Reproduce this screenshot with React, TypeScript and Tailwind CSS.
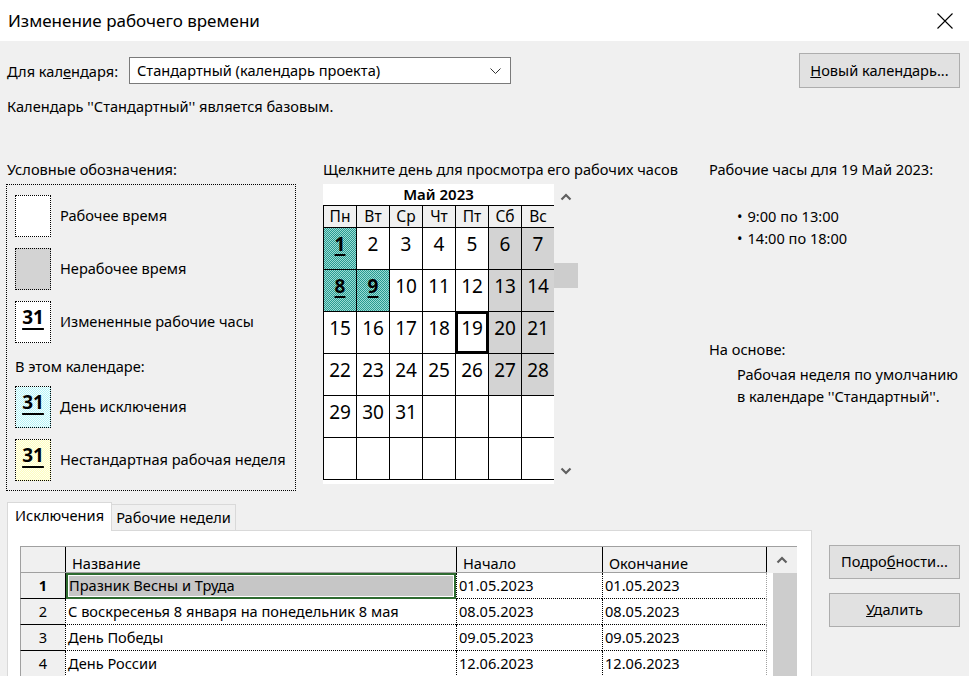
import React from "react";

const weeks: (number | null)[][] = [
  [1, 2, 3, 4, 5, 6, 7],
  [8, 9, 10, 11, 12, 13, 14],
  [15, 16, 17, 18, 19, 20, 21],
  [22, 23, 24, 25, 26, 27, 28],
  [29, 30, 31, null, null, null, null],
  [null, null, null, null, null, null, null],
];

const exceptions = [1, 8, 9];
const dayNames = ["Пн", "Вт", "Ср", "Чт", "Пт", "Сб", "Вс"];

const rows = [
  { n: 1, name: "Празник Весны и Труда", start: "01.05.2023", end: "01.05.2023" },
  { n: 2, name: "С воскресенья 8 января на понедельник 8 мая", start: "08.05.2023", end: "08.05.2023" },
  { n: 3, name: "День Победы", start: "09.05.2023", end: "09.05.2023" },
  { n: 4, name: "День России", start: "12.06.2023", end: "12.06.2023" },
];

const ChevronUp = () => (
  <svg width="12" height="8" viewBox="0 0 12 8">
    <polyline points="1.5,6.5 6,2 10.5,6.5" fill="none" stroke="#606060" strokeWidth="2.2" />
  </svg>
);

const ChevronDown = () => (
  <svg width="12" height="8" viewBox="0 0 12 8">
    <polyline points="1.5,1.5 6,6 10.5,1.5" fill="none" stroke="#606060" strokeWidth="2.2" />
  </svg>
);

const Swatch = ({ kind }: { kind: "work" | "off" | "changed" | "exception" | "week" }) => {
  const bg =
    kind === "off"
      ? "bg-[#d3d3d3]"
      : kind === "exception"
      ? "bg-[repeating-conic-gradient(#b8f2f6_0_25%,#f2ffff_0_50%)] bg-[length:2px_2px]"
      : kind === "week"
      ? "bg-[repeating-conic-gradient(#fdfdc0_0_25%,#ffffee_0_50%)] bg-[length:2px_2px]"
      : "bg-white";
  return (
    <div className={`w-[36px] h-[42px] border border-dotted border-black flex justify-center pt-[3px] ${bg}`}>
      {kind !== "work" && kind !== "off" && (
        <span className="text-[19px] font-bold leading-[24px] underline decoration-2 underline-offset-[4px]">31</span>
      )}
    </div>
  );
};

const Calendar = () => (
  <div className="flex">
    <div className="w-[231px] h-[300px] bg-white">
      <div className="h-[21px] text-center text-[15px] font-semibold leading-[21px]">Май 2023</div>
      <div className="grid grid-cols-[repeat(7,33px)] border-b border-black">
        {dayNames.map((d) => (
          <div key={d} className="h-[22px] border-l border-t border-black bg-[#f0f0f0] text-center text-[15.5px] leading-[21px]">
            {d}
          </div>
        ))}
        {weeks.flat().map((day, i) => {
          const col = i % 7;
          const isEx = day !== null && exceptions.includes(day);
          const isOff = day !== null && col >= 5 && !isEx;
          const isSel = day === 19;
          let bg = "bg-white";
          if (isEx) bg = "bg-[repeating-conic-gradient(#2a9a90_0_25%,#9adcd5_0_50%)] bg-[length:2px_2px]";
          else if (isOff) bg = "bg-[#d3d3d3]";
          return (
            <div
              key={i}
              className={`h-[42px] border-l border-t border-black flex justify-center pt-[3px] text-[19px] leading-[26px] ${bg} ${
                isSel ? "shadow-[inset_-2px_-2px_0_0_#000,inset_2px_2px_0_0_#000]" : ""
              }`}
            >
              {day !== null && (
                <span className={isEx ? "font-bold underline decoration-2 underline-offset-[3px]" : ""}>{day}</span>
              )}
            </div>
          );
        })}
      </div>
    </div>
    <div className="w-[26px] h-[300px] flex flex-col">
      <div className="h-[26px] flex items-center justify-center pr-[2px]">
        <ChevronUp />
      </div>
      <div className="mt-[53px] h-[25px] w-[24px] bg-[#cdcdcd]" />
      <div className="flex-1" />
      <div className="h-[26px] flex items-center justify-center pr-[2px]">
        <ChevronDown />
      </div>
    </div>
  </div>
);

export default function App() {
  return (
    <div className="w-[969px] h-[676px] overflow-hidden bg-[#f0f0f0] text-black text-[14.6px] font-['Noto_Sans',sans-serif] flex flex-col">
      {/* title bar */}
      <div className="h-[41px] shrink-0 bg-white flex items-center justify-between pl-[8px] pr-[16px]">
        <span className="text-[17px]">Изменение рабочего времени</span>
        <svg width="16" height="16" viewBox="0 0 16 16">
          <path d="M0.5 0.5 L15.5 15.5 M15.5 0.5 L0.5 15.5" stroke="#000" strokeWidth="1.1" />
        </svg>
      </div>

      {/* calendar selector */}
      <div className="mt-[12px] h-[35px] flex items-center pl-[7px] pr-[9px]">
        <span className="w-[122px] leading-[20px]">
          Для кал<span className="underline">е</span>ндаря:
        </span>
        <div className="w-[382px] h-[27px] bg-white border border-[#7a7a7a] flex items-center justify-between pl-[7px] pr-[9px]">
          <span>Стандартный (календарь проекта)</span>
          <svg width="11" height="6" viewBox="0 0 11 6">
            <polyline points="0.5,0.5 5.5,5.5 10.5,0.5" fill="none" stroke="#333" strokeWidth="1" />
          </svg>
        </div>
        <div className="flex-1" />
        <button className="w-[161px] h-[35px] bg-[#e1e1e1] border border-[#adadad]">
          <span className="underline">Н</span>овый календарь...
        </button>
      </div>

      <div className="mt-[8px] pl-[7px] leading-[20px]">Календарь ''Стандартный'' является базовым.</div>

      {/* main area */}
      <div className="mt-[43px] flex">
        {/* legend */}
        <div className="ml-[6px] w-[290px] flex flex-col">
          <div className="h-[25px] pl-[1px] leading-[20px]">Условные обозначения:</div>
          <div className="h-[307px] border border-dotted border-black pl-[8px] pt-[10px] flex flex-col">
            <div className="flex items-center gap-[9px]">
              <Swatch kind="work" />
              <span>Рабочее время</span>
            </div>
            <div className="mt-[11px] flex items-center gap-[9px]">
              <Swatch kind="off" />
              <span>Нерабочее время</span>
            </div>
            <div className="mt-[11px] flex items-center gap-[9px]">
              <Swatch kind="changed" />
              <span>Измененные рабочие часы</span>
            </div>
            <div className="mt-[13px] mb-[10px] leading-[20px]">В этом календаре:</div>
            <div className="flex items-center gap-[9px]">
              <Swatch kind="exception" />
              <span>День исключения</span>
            </div>
            <div className="mt-[11px] flex items-center gap-[9px]">
              <Swatch kind="week" />
              <span>Нестандартная рабочая неделя</span>
            </div>
          </div>
        </div>

        {/* calendar */}
        <div className="ml-[27px] w-[386px] flex flex-col">
          <div className="h-[25px] leading-[20px]">Щелкните день для просмотра его рабочих часов</div>
          <Calendar />
        </div>

        {/* working hours */}
        <div className="flex flex-col">
          <div className="leading-[20px]">Рабочие часы для 19 Май 2023:</div>
          <ul className="mt-[26px] pl-[28px] leading-[22px]">
            <li className="flex gap-[5px]">
              <span>•</span>
              <span>9:00 по 13:00</span>
            </li>
            <li className="flex gap-[5px]">
              <span>•</span>
              <span>14:00 по 18:00</span>
            </li>
          </ul>
          <div className="mt-[90px] leading-[20px]">На основе:</div>
          <div className="mt-[4px] pl-[28px] leading-[22px]">
            Рабочая неделя по умолчанию
            <br />в календаре ''Стандартный''.
          </div>
        </div>
      </div>

      {/* bottom: tabs + buttons */}
      <div className="mt-[11px] flex flex-1 min-h-0">
        <div className="ml-[7px] w-[805px] flex flex-col">
          <div className="h-[28px] flex items-end">
            <div className="relative z-10 -mb-px h-[29px] w-[105px] bg-white border border-b-0 border-[#d9d9d9] flex items-center justify-center pb-[2px]">
              Исключения
            </div>
            <div className="h-[26px] w-[124px] bg-[#f0f0f0] border border-l-0 border-b-0 border-[#d9d9d9] flex items-center justify-center">
              Рабочие недели
            </div>
          </div>
          <div className="flex-1 bg-white border border-[#d9d9d9] pl-[12px] pt-[15px]">
            <div className="flex">
              <div className="w-[747px] flex flex-col">
                {/* header */}
                <div className="flex h-[27px] bg-[#f0f0f0] border-t border-b border-[#a0a0a0]">
                  <div className="w-[45px] border-l border-[#a0a0a0]" />
                  <div className="w-[391px] border-l border-black pl-[6px] pt-[6px] leading-[20px]">Название</div>
                  <div className="w-[146px] border-l border-black pl-[6px] pt-[6px] leading-[20px]">Начало</div>
                  <div className="w-[165px] border-l border-r border-l-black border-r-black pl-[6px] pt-[6px] leading-[20px]">
                    Окончание
                  </div>
                </div>
                {rows.map((r) => (
                  <div key={r.n} className="flex h-[26px]">
                    <div
                      className={`w-[45px] bg-[#f0f0f0] border-l border-b border-l-[#a0a0a0] border-b-black flex items-center justify-center ${
                        r.n === 1 ? "font-bold" : ""
                      }`}
                    >
                      {r.n}
                    </div>
                    {r.n === 1 ? (
                      <div className="w-[391px] border-l border-black bg-[#c6c6c6] shadow-[inset_0_0_0_2px_#2e6b30,inset_0_0_0_3px_#fff] flex items-center pl-[3px] whitespace-nowrap">
                        {r.name}
                      </div>
                    ) : (
                      <div className="w-[391px] border-l border-b border-l-black border-dotted border-b-black flex items-center pl-[2px] whitespace-nowrap">
                        {r.name}
                      </div>
                    )}
                    <div className="w-[146px] border-l border-b border-dotted border-black flex items-center pl-[2px]">{r.start}</div>
                    <div className="w-[165px] border-l border-b border-dotted border-black border-r border-r-[#a0a0a0] flex items-center pl-[2px]">
                      {r.end}
                    </div>
                  </div>
                ))}
              </div>
              {/* table scrollbar */}
              <div className="w-[30px] flex flex-col">
                <div className="h-[27px] bg-[#f0f0f0] border-t border-[#a0a0a0] flex items-center justify-center">
                  <ChevronUp />
                </div>
                <div className="flex-1 flex">
                  <div className="w-[6px]" />
                  <div className="w-[24px] h-[200px] bg-[#cdcdcd]" />
                </div>
              </div>
            </div>
          </div>
        </div>
        <div className="ml-[17px] pt-[43px] flex flex-col gap-[14px]">
          <button className="w-[131px] h-[34px] bg-[#e1e1e1] border border-[#adadad]">
            Подро<span className="underline">б</span>ности...
          </button>
          <button className="w-[131px] h-[34px] bg-[#e1e1e1] border border-[#adadad]">
            <span className="underline">У</span>далить
          </button>
        </div>
      </div>
    </div>
  );
}
